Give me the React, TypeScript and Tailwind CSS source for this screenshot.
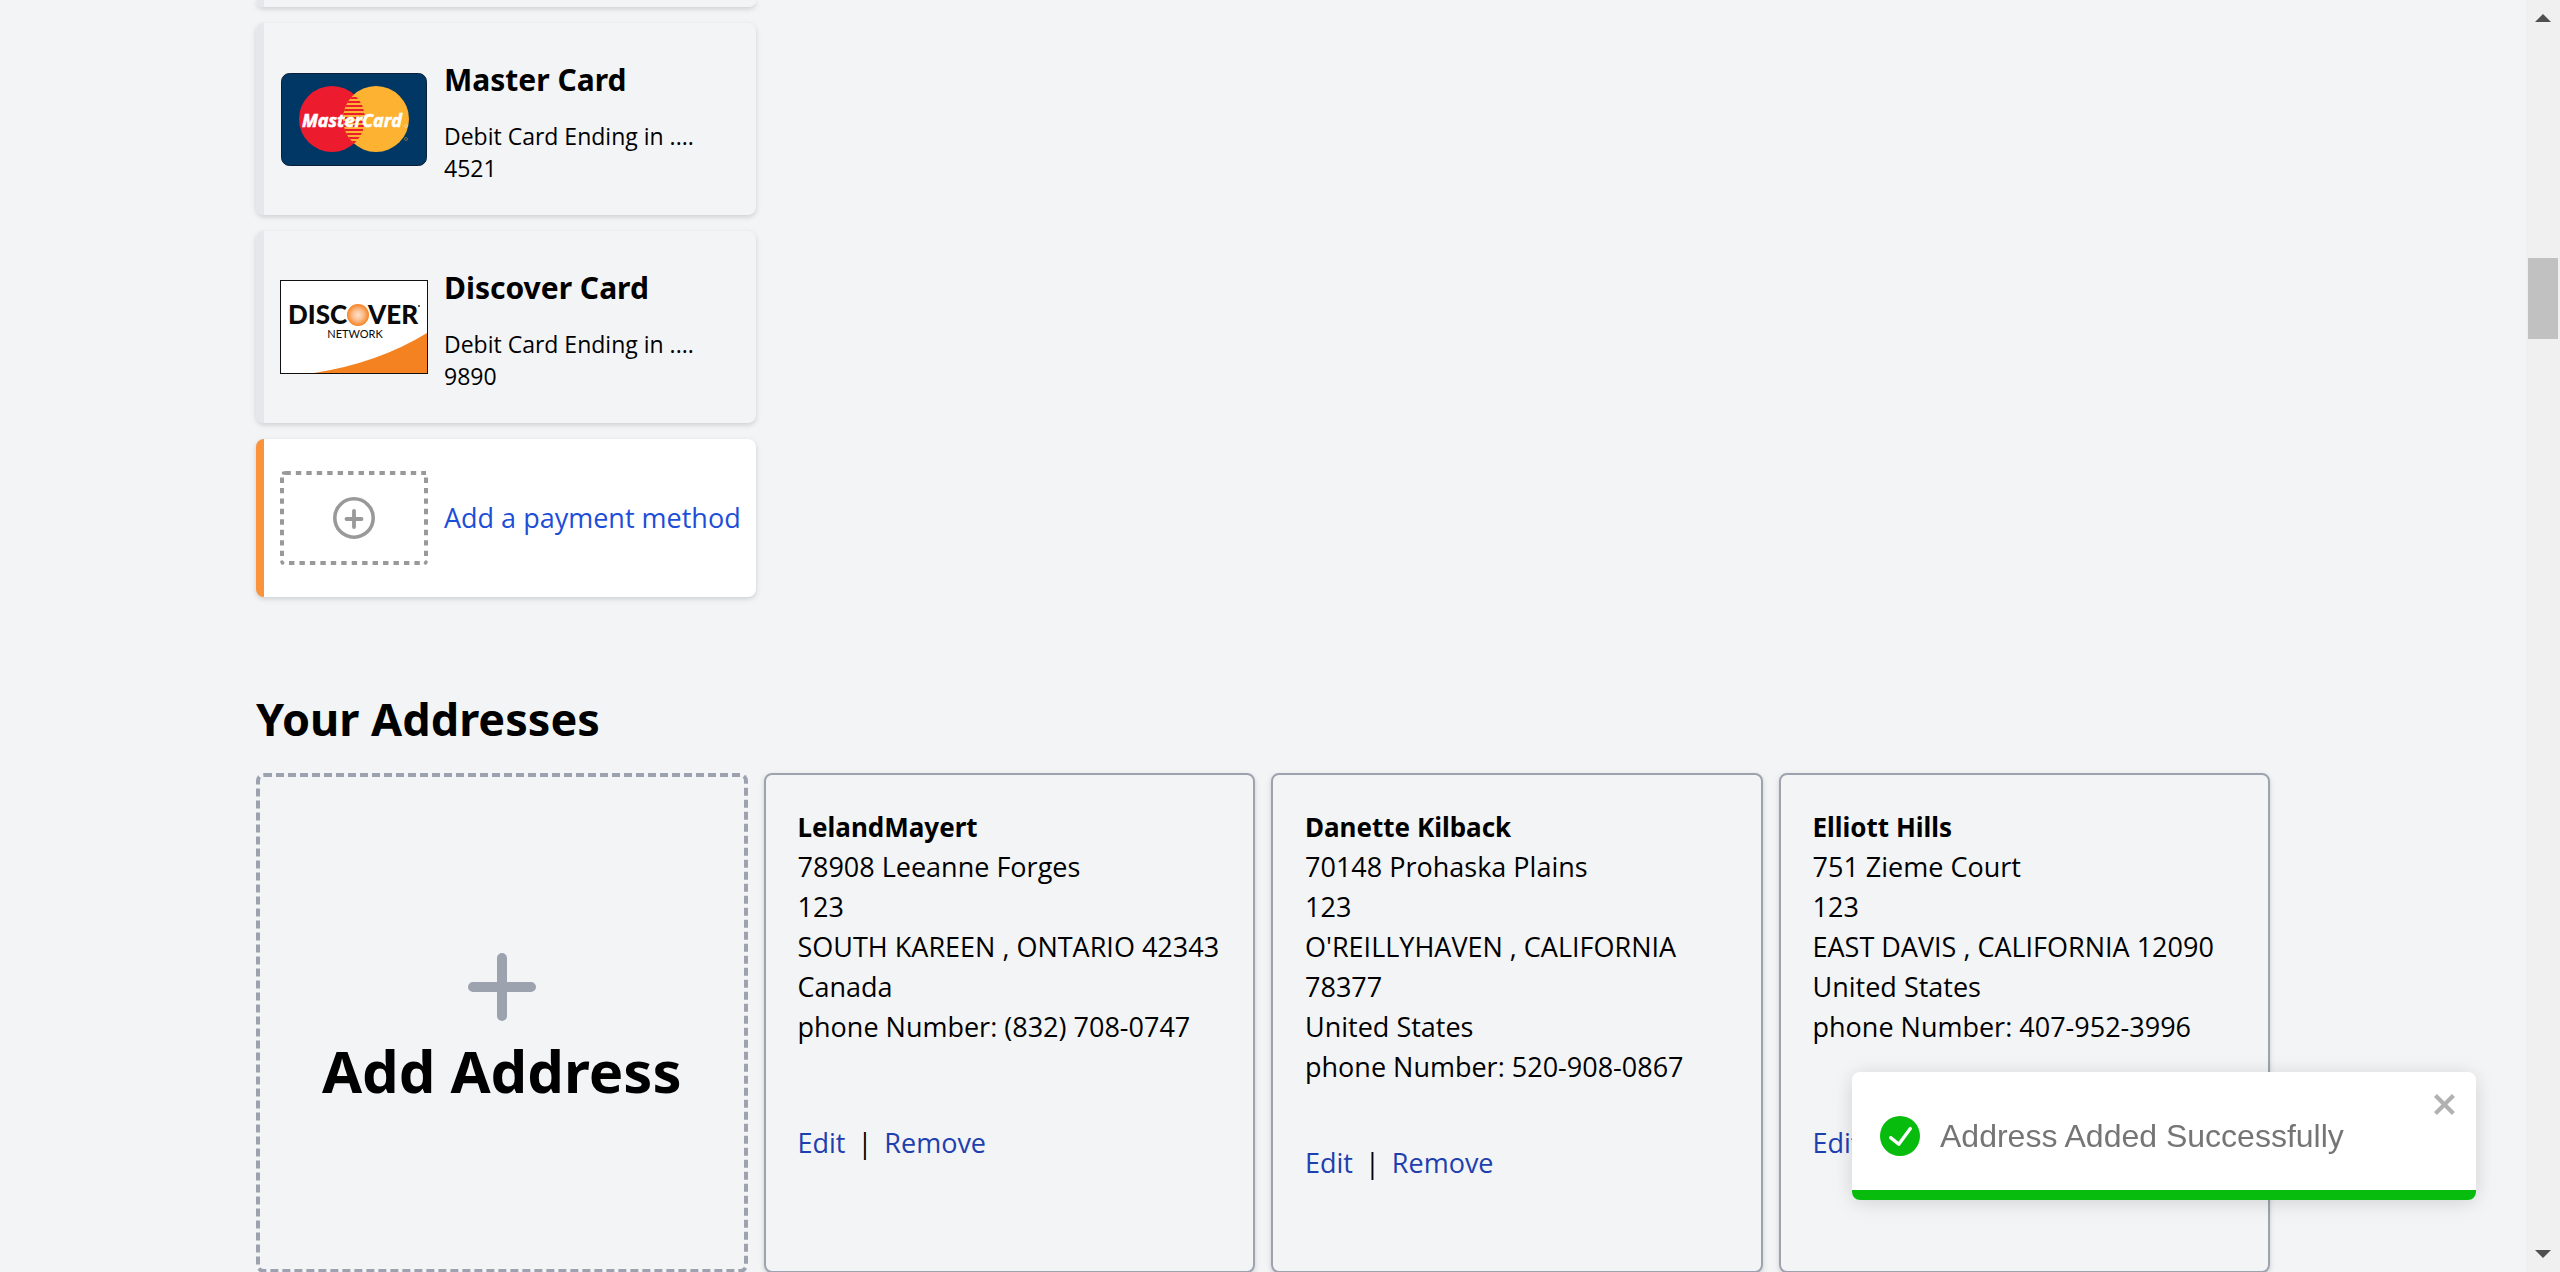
import React from "react";

type Address = {
  name: string;
  street: string;
  unit: string;
  city: string;
  country: string;
  phone: string;
};

const addresses: Address[] = [
  {
    name: "LelandMayert",
    street: "78908 Leeanne Forges",
    unit: "123",
    city: "SOUTH KAREEN , ONTARIO 42343",
    country: "Canada",
    phone: "(832) 708-0747",
  },
  {
    name: "Danette Kilback",
    street: "70148 Prohaska Plains",
    unit: "123",
    city: "O'REILLYHAVEN , CALIFORNIA 78377",
    country: "United States",
    phone: "520-908-0867",
  },
  {
    name: "Elliott Hills",
    street: "751 Zieme Court",
    unit: "123",
    city: "EAST DAVIS , CALIFORNIA 12090",
    country: "United States",
    phone: "407-952-3996",
  },
];

const stripes = [25, 29, 33, 37, 41, 45, 49, 53, 57, 61, 65, 69];

function MasterCardLogo() {
  return (
    <svg viewBox="0 0 148 94" className="h-[94px] w-[148px] shrink-0" role="img" aria-label="MasterCard">
      <defs>
        <clipPath id="mc-right">
          <circle cx="96" cy="47" r="33" />
        </clipPath>
        <clipPath id="mc-left">
          <circle cx="52" cy="47" r="33" />
        </clipPath>
      </defs>
      <rect x="1.5" y="1.5" width="145" height="92" rx="8" fill="#003764" stroke="#0b1f38" />
      <circle cx="52" cy="47" r="33" fill="#ed1b2e" />
      <circle cx="96" cy="47" r="33" fill="#fdb231" />
      <g clipPath="url(#mc-right)">
        <g clipPath="url(#mc-left)">
          {stripes.map((y) => (
            <rect key={y} x="60" y={y} width="28" height="2" fill="#ed1b2e" />
          ))}
        </g>
      </g>
      <text
        x="22"
        y="55"
        fontSize="18"
        fontWeight="700"
        fontStyle="italic"
        fill="#fff"
        stroke="#fff"
        strokeWidth="0.6"
        fontFamily="Open Sans, sans-serif"
      >
        MasterCard
      </text>
      <circle cx="126" cy="54" r="1.5" fill="none" stroke="#fff" strokeOpacity="0.6" strokeWidth="0.6" />
      <circle cx="126" cy="67" r="1.5" fill="none" stroke="#8a7a4a" strokeWidth="0.8" />
    </svg>
  );
}

function DiscoverLogo() {
  return (
    <svg viewBox="0 0 148 94" className="h-[94px] w-[148px] shrink-0" role="img" aria-label="Discover Network">
      <defs>
        <radialGradient id="disc-o">
          <stop offset="0" stopColor="#fde3cf" />
          <stop offset="0.5" stopColor="#fbbd8c" />
          <stop offset="1" stopColor="#f58220" />
        </radialGradient>
      </defs>
      <rect x="0.5" y="0.5" width="147" height="93" fill="#fff" stroke="#111" />
      <path d="M34 93 Q98 83 147 53 V93 Z" fill="#f58220" />
      <g fill="#0a0a0a" fontFamily="Lato, sans-serif">
        <text x="8" y="44" fontSize="26" fontWeight="900">
          DISC
        </text>
        <text x="88" y="44" fontSize="26" fontWeight="900">
          VER
        </text>
        <text x="75" y="58" fontSize="11" textAnchor="middle">
          NETWORK
        </text>
      </g>
      <circle cx="78" cy="35" r="11" fill="url(#disc-o)" />
      <circle cx="139" cy="26" r="1" fill="#333" />
    </svg>
  );
}

function AddPaymentIcon() {
  return (
    <svg viewBox="0 0 148 94" className="h-[94px] w-[148px] shrink-0" fill="none" stroke="#999" strokeWidth="4" aria-hidden="true">
      <path d="M5.4 2 H146" strokeDasharray="5.4 5.05" />
      <path d="M3.5 2 H8" strokeLinecap="round" strokeWidth="3.6" />
      <path d="M2 6.5 V90" strokeDasharray="5.4 5.05" />
      <path d="M146 6.5 V90" strokeDasharray="5.4 5.05" />
      <path d="M9 92 H142" strokeDasharray="5.4 5.05" />
      <path d="M2 91 L2.6 92 M145.5 92 L146 91" strokeLinecap="round" strokeWidth="3.5" />
      <circle cx="74" cy="47" r="19.2" strokeWidth="3.6" />
      <path d="M74 40 V56 M66.5 48 H81.5" strokeLinecap="round" strokeWidth="3.8" />
    </svg>
  );
}

function PaymentCard({ logo, title, digits }: { logo: React.ReactNode; title: string; digits: string }) {
  return (
    <article className="flex h-48 items-center gap-4 rounded-lg border-l-8 border-[#e5e7eb] px-4 shadow-[0_2px_6px_rgba(0,0,0,0.1),0_2px_4px_rgba(0,0,0,0.06)]">
      {logo}
      <div className="flex-1 pt-[2px]">
        <h3 className="mb-4 font-['Noto_Sans',sans-serif] text-[30px] leading-[48px] font-bold">{title}</h3>
        <p className="w-64 text-[23px] leading-8">Debit Card Ending in .... {digits}</p>
      </div>
    </article>
  );
}

function AddressCard({ address }: { address: Address }) {
  return (
    <article className="flex h-[500px] flex-col rounded-lg border-2 border-[#9ca3af] p-8 text-[27px] leading-10 shadow-[0_2px_6px_rgba(0,0,0,0.1),0_2px_4px_rgba(0,0,0,0.06)]">
      <h3 className="font-['Noto_Sans',sans-serif] text-[26px] leading-10 font-bold">{address.name}</h3>
      <p>{address.street}</p>
      <p>{address.unit}</p>
      <p>{address.city}</p>
      <p>{address.country}</p>
      <p>phone Number: {address.phone}</p>
      <div className="flex flex-1 items-center gap-3">
        <button type="button" className="text-[#1e40af]">
          Edit
        </button>
        <span>|</span>
        <button type="button" className="text-[#1e40af]">
          Remove
        </button>
      </div>
    </article>
  );
}

function Toast() {
  return (
    <div
      role="alert"
      className="fixed right-[84px] bottom-[72px] w-[624px] overflow-hidden rounded-lg bg-white font-['Liberation_Sans',Arial,sans-serif] shadow-[0_2px_20px_rgba(0,0,0,0.1),0_4px_30px_rgba(0,0,0,0.05)]"
    >
      <div className="flex h-32 items-start p-4">
        <div className="flex flex-1 items-center gap-5 self-center px-3">
          <svg viewBox="0 0 24 24" className="size-10 shrink-0" fill="#07bc0c" aria-hidden="true">
            <path d="M12 0a12 12 0 1012 12A12.014 12.014 0 0012 0zm6.927 8.2l-6.845 9.289a1.011 1.011 0 01-1.43.188l-4.888-3.908a1 1 0 111.25-1.562l4.076 3.261 6.227-8.451a1 1 0 111.61 1.183z" />
          </svg>
          <span className="text-[32px] leading-[48px] text-[#757575]">Address Added Successfully</span>
        </div>
        <button type="button" aria-label="close" className="opacity-30">
          <svg viewBox="0 0 14 16" className="h-8 w-7" fill="#000" aria-hidden="true">
            <path
              fillRule="evenodd"
              d="M7.71 8.23l3.75 3.75-1.48 1.48-3.75-3.75-3.75 3.75L1 11.98l3.75-3.75L1 4.48 2.48 3l3.75 3.75L9.98 3l1.48 1.48-3.75 3.75z"
            />
          </svg>
        </button>
      </div>
      <div className="absolute inset-x-0 bottom-0 h-[10px] bg-[#07bc0c]" />
    </div>
  );
}

function ScrollTrack() {
  return (
    <div className="flex w-[34px] shrink-0 flex-col items-center bg-[#f0f0f0] py-[14px]" aria-hidden="true">
      <svg viewBox="0 0 16 8" className="h-2 w-4" fill="#505050">
        <path d="M8 0 L16 8 H0 Z" />
      </svg>
      <div className="mt-[236px] h-[81px] w-[30px] bg-[#c1c1c1]" />
      <svg viewBox="0 0 16 8" className="mt-auto h-2 w-4" fill="#505050">
        <path d="M0 0 H16 L8 8 Z" />
      </svg>
    </div>
  );
}

export default function App() {
  return (
    <div className="flex h-screen overflow-hidden bg-[#f3f4f6] font-['Open_Sans','Noto_Sans',sans-serif] text-black">
      <main className="min-w-0 flex-1 px-64">
        <section className="flex w-[500px] flex-col gap-4">
          <div className="h-[7px] rounded-b-lg border-l-8 border-[#e5e7eb] shadow-[0_2px_6px_rgba(0,0,0,0.1),0_2px_4px_rgba(0,0,0,0.06)]" />
          <PaymentCard logo={<MasterCardLogo />} title="Master Card" digits="4521" />
          <PaymentCard logo={<DiscoverLogo />} title="Discover Card" digits="9890" />
          <article className="flex items-center gap-4 rounded-lg border-l-8 border-[#fb923c] bg-white px-4 py-8 shadow-[0_2px_6px_rgba(0,0,0,0.1),0_2px_4px_rgba(0,0,0,0.06)]">
            <AddPaymentIcon />
            <button type="button" className="text-[27px] leading-10 whitespace-nowrap text-[#1d4ed8]">
              Add a payment method
            </button>
          </article>
        </section>
        <section className="mt-[90px]">
          <h2 className="mb-[22px] font-['Noto_Sans',sans-serif] text-[45px] leading-[64px] font-bold">Your Addresses</h2>
          <div className="grid grid-cols-4 gap-4">
            <button
              type="button"
              className="flex h-[500px] flex-col items-center justify-center rounded-lg border-4 border-dashed border-[#9ca3af]"
            >
              <svg viewBox="0 0 96 96" className="size-24" fill="none" stroke="#9ca3af" strokeWidth="10" strokeLinecap="round" aria-hidden="true">
                <path d="M48 19 V77 M19 48 H77" />
              </svg>
              <span className="font-['Noto_Sans',sans-serif] text-[58px] leading-[72px] font-bold">Add Address</span>
            </button>
            {addresses.map((address) => (
              <AddressCard key={address.name} address={address} />
            ))}
          </div>
        </section>
      </main>
      <ScrollTrack />
      <Toast />
    </div>
  );
}
